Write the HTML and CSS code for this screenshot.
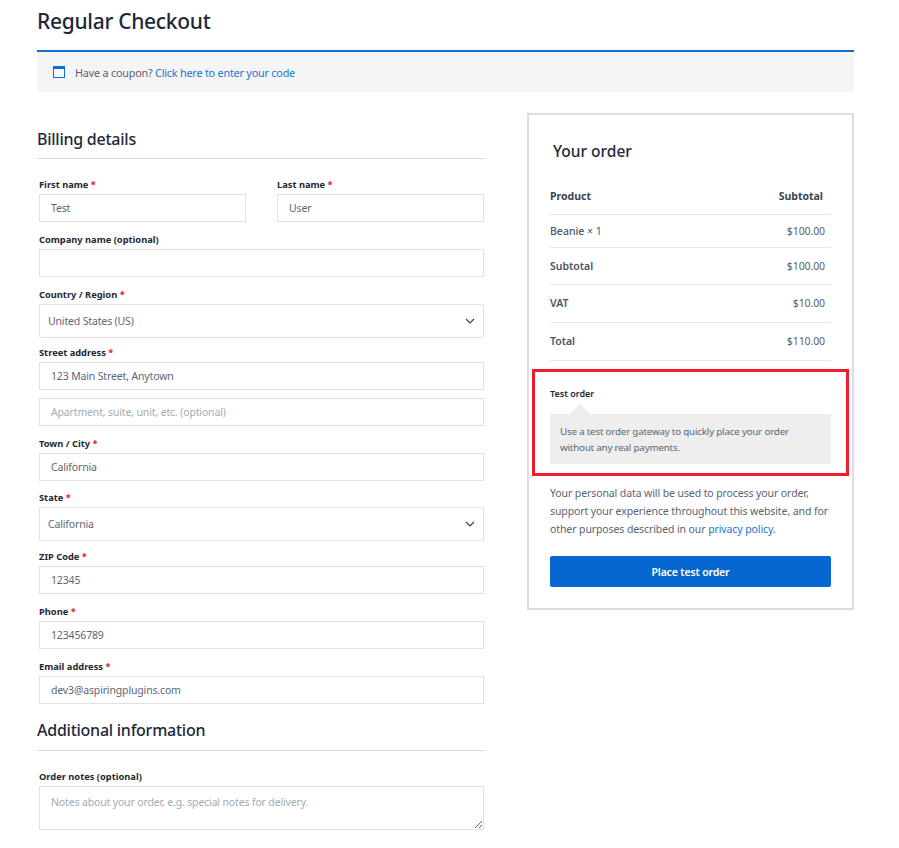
FILE: index.html
```html
<!DOCTYPE html>
<html lang="en">
<head>
    <meta charset="UTF-8">
    <meta name="viewport" content="width=device-width, initial-scale=1.0">
    <title>Regular Checkout</title>
    <link rel="stylesheet" href="styles.css">
</head>
<body>
    <div class="container">
        <h1>Regular Checkout</h1>

        <div class="notice">
            <svg class="notice-icon" width="12" height="12" viewBox="0 0 12 12">
                <rect x="0.5" y="0.5" width="11" height="11" fill="none" stroke="#0f6fd4"/>
                <rect x="0" y="0" width="12" height="3" fill="#0f6fd4"/>
            </svg>
            <span>Have a coupon? <a href="#">Click here to enter your code</a></span>
        </div>

        <div class="checkout">
            <form class="billing">
                <h3 class="section-title">Billing details</h3>

                <div class="name-row">
                    <div class="field">
                        <label>First name <span class="req">*</span></label>
                        <input type="text" value="Test">
                    </div>
                    <div class="field">
                        <label>Last name <span class="req">*</span></label>
                        <input type="text" value="User">
                    </div>
                </div>

                <div class="field">
                    <label>Company name (optional)</label>
                    <input type="text">
                </div>

                <div class="field field-select">
                    <label>Country / Region <span class="req">*</span></label>
                    <div class="select-wrap">
                        <select><option>United States (US)</option></select>
                        <svg class="chevron" width="10" height="6" viewBox="0 0 10 6"><path d="M1 1l4 4 4-4" fill="none" stroke="#3c434a" stroke-width="1.2"/></svg>
                    </div>
                </div>

                <div class="field field-tight">
                    <label>Street address <span class="req">*</span></label>
                    <input type="text" value="123 Main Street, Anytown">
                </div>
                <div class="field">
                    <input type="text" placeholder="Apartment, suite, unit, etc. (optional)">
                </div>

                <div class="field field-tight">
                    <label>Town / City <span class="req">*</span></label>
                    <input type="text" value="California">
                </div>

                <div class="field field-select field-state">
                    <label>State <span class="req">*</span></label>
                    <div class="select-wrap">
                        <select><option>California</option></select>
                        <svg class="chevron" width="10" height="6" viewBox="0 0 10 6"><path d="M1 1l4 4 4-4" fill="none" stroke="#3c434a" stroke-width="1.2"/></svg>
                    </div>
                </div>

                <div class="field">
                    <label>ZIP Code <span class="req">*</span></label>
                    <input type="text" value="12345">
                </div>

                <div class="field">
                    <label>Phone <span class="req">*</span></label>
                    <input type="text" value="123456789">
                </div>

                <div class="field">
                    <label>Email address <span class="req">*</span></label>
                    <input type="text" value="dev3@aspiringplugins.com">
                </div>

                <h3 class="section-title section-additional">Additional information</h3>

                <div class="field">
                    <label>Order notes (optional)</label>
                    <textarea placeholder="Notes about your order, e.g. special notes for delivery."></textarea>
                </div>
            </form>

            <div class="order">
                <h3 class="order-title">Your order</h3>

                <table class="order-table">
                    <tr class="row-head"><th>Product</th><th class="col-head">Subtotal</th></tr>
                    <tr class="row-item"><td>Beanie <span class="qty">× 1</span></td><td class="amount">$100.00</td></tr>
                    <tr class="row-sub"><td class="row-label">Subtotal</td><td class="amount">$100.00</td></tr>
                    <tr><td class="row-label">VAT</td><td class="amount">$10.00</td></tr>
                    <tr><td class="row-label">Total</td><td class="amount">$110.00</td></tr>
                </table>

                <div class="payment">
                    <div class="payment-name">Test order</div>
                    <div class="payment-box">Use a test order gateway to quickly place your order without any real payments.</div>
                </div>

                <p class="privacy">Your personal data will be used to process your order, support your experience throughout this website, and for other purposes described in our <a href="#">privacy policy</a>.</p>

                <button class="place-order" type="button">Place test order</button>
            </div>
        </div>
    </div>
</body>
</html>
```

FILE: styles.css
```css
* {
    box-sizing: border-box;
    margin: 0;
    padding: 0;
}

body {
    font-family: 'Noto Sans', 'Open Sans', sans-serif;
    font-size: 12px;
    color: #4a5565;
    background-color: #fff;
}

a {
    color: #1a73d9;
    text-decoration: none;
}

.container {
    width: 817px;
    margin-left: 37px;
}

h1 {
    height: 50px;
    padding-top: 5px;
    font-size: 21px;
    line-height: 32px;
    letter-spacing: -0.3px;
    font-weight: 500;
    color: #1e293b;
}

.notice {
    display: flex;
    align-items: center;
    height: 42px;
    padding-left: 16px;
    background-color: #f5f5f5;
    border-top: 2px solid #0f6fd4;
    font-size: 10.8px;
    letter-spacing: -0.2px;
    color: #5a6270;
}

.notice-icon {
    margin-right: 10px;
}

.checkout {
    display: flex;
    align-items: flex-start;
    justify-content: space-between;
    margin-top: 21px;
}

.billing {
    width: 449px;
}

.section-title {
    height: 46px;
    margin-bottom: 17px;
    padding-top: 14px;
    border-bottom: 1px solid #dcdfe4;
    font-size: 16px;
    line-height: 24px;
    letter-spacing: -0.25px;
    font-weight: 500;
    color: #1e293b;
}

.section-additional {
    height: 38px;
    padding-top: 5px;
}

.name-row {
    display: grid;
    grid-template-columns: 207px 207px;
    gap: 31px;
    margin: 0 2px;
}

.field {
    margin: 0 2px 9.5px;
}

.name-row .field {
    margin-left: 0;
    margin-right: 0;
}

.field-select {
    margin-bottom: 6px;
}

.field-state {
    margin-bottom: 7px;
}

.field-tight {
    margin-bottom: 8.5px;
}

label {
    display: block;
    height: 18px;
    font-size: 9.3px;
    line-height: 18px;
    font-weight: 700;
    color: #1f2733;
}

.req {
    color: #e8202a;
}

input,
select,
textarea {
    display: block;
    width: 100%;
    border: 1px solid #dfe2e7;
    background: #fff;
    font-family: inherit;
    font-size: 10.5px;
    letter-spacing: -0.15px;
    color: #5d6673;
    outline: none;
    border-radius: 0;
}

input {
    height: 27.5px;
    padding: 0 11px;
}

select {
    height: 34px;
    padding: 0 8px;
    border-radius: 2px;
    appearance: none;
}

textarea {
    height: 44px;
    padding: 6px 11px;
    line-height: 18px;
}

input::placeholder,
textarea::placeholder {
    color: #a5aab3;
    opacity: 1;
}

.select-wrap {
    position: relative;
}

.chevron {
    position: absolute;
    top: 14px;
    right: 9px;
}

.order {
    width: 327px;
    height: 497px;
    padding: 0 21px;
    border: 2px solid #dcdde4;
}

.order-title {
    padding: 24px 0 0 3px;
    font-size: 15.5px;
    line-height: 24px;
    font-weight: 500;
    color: #1e293b;
}

.order-table {
    width: 100%;
    margin-top: 14px;
    border-collapse: collapse;
    font-size: 10.5px;
}

.order-table th,
.order-table td {
    height: 38px;
    border-bottom: 1px solid #e3e5ea;
    text-align: left;
    font-weight: 400;
}

.order-table th {
    height: 37px;
    padding-top: 2px;
    font-weight: 700;
    color: #3a4453;
}

.order-table .row-item td {
    height: 33px;
}

.order-table .row-sub td {
    height: 37px;
}

.order-table .col-head {
    padding-right: 8px;
    text-align: right;
}

.order-table .row-label {
    font-weight: 600;
    color: #4a5565;
}

.order-table .row-item td:first-child {
    font-weight: 500;
}

.qty {
    font-weight: 400;
}

.order-table .amount {
    padding-right: 6px;
    text-align: right;
    letter-spacing: -0.1px;
    color: #5a5f68;
}

.payment {
    margin: 8px -18px 0;
    padding: 14px 15px 9px;
    border: 3px solid #ed1c2e;
}

.payment-name {
    position: relative;
    height: 28px;
    font-size: 9px;
    line-height: 16px;
    font-weight: 600;
    color: #1f2733;
}

.payment-name::after {
    content: "";
    position: absolute;
    bottom: 0;
    left: 20px;
    border: 10px solid transparent;
    border-top: 0;
    border-bottom-color: #eee;
}

.payment-box {
    height: 50px;
    padding: 10px 10px;
    background-color: #eee;
    border-radius: 1px;
    font-size: 9.8px;
    letter-spacing: -0.2px;
    line-height: 16px;
    color: #5d6673;
}

.privacy {
    margin-top: 8px;
    font-size: 10.5px;
    line-height: 18px;
    letter-spacing: -0.1px;
    color: #5a6270;
}

.place-order {
    display: block;
    width: 100%;
    height: 31px;
    margin-top: 18px;
    padding-top: 1px;
    background-color: #0767d1;
    border: none;
    border-radius: 2px;
    color: #fff;
    font-family: inherit;
    font-size: 10.5px;
    letter-spacing: -0.15px;
    font-weight: 600;
    cursor: pointer;
}
```
